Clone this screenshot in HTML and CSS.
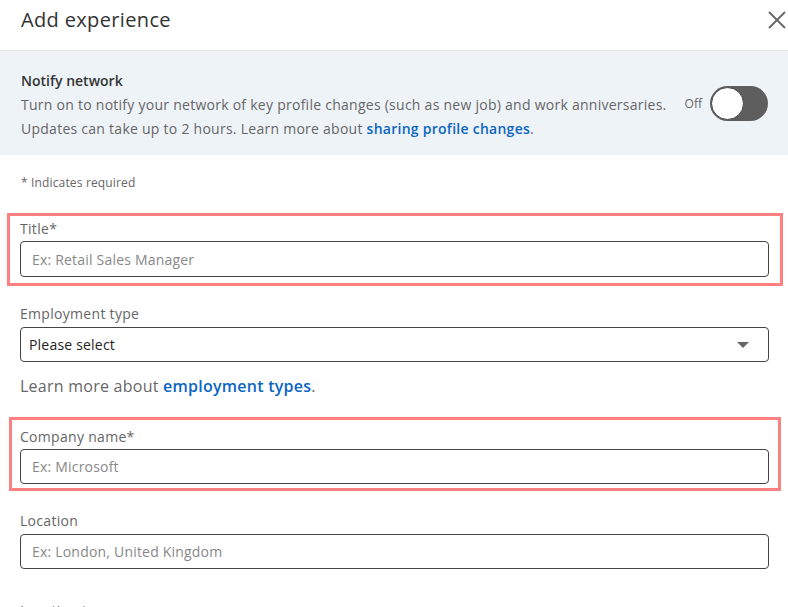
FILE: index.html
```html
<!DOCTYPE html>
<html lang="en">
<head>
<meta charset="utf-8">
<title>Add experience</title>
<link rel="stylesheet" href="styles.css">
</head>
<body>
<div class="modal">
  <header class="modal-header">
    <h2 class="modal-title">Add experience</h2>
    <button class="close-btn" aria-label="Dismiss">
      <svg width="18" height="18" viewBox="0 0 18 18"><path d="M1 1 L17 17 M17 1 L1 17" stroke="#666" stroke-width="1.8" fill="none"/></svg>
    </button>
  </header>

  <section class="notify">
    <div class="notify-text">
      <div class="notify-title">Notify network</div>
      <p class="notify-desc">Turn on to notify your network of key profile changes (such as new job) and work anniversaries. Updates can take up to 2 hours. Learn more about <a href="#" class="link">sharing profile changes</a>.</p>
    </div>
    <div class="toggle-wrap">
      <span class="toggle-label">Off</span>
      <span class="toggle"><span class="knob"></span></span>
    </div>
  </section>

  <div class="form">
    <p class="required-note">* Indicates required</p>

    <div class="highlight highlight-1">
      <label class="field-label">Title*</label>
      <div class="input"><span class="placeholder">Ex: Retail Sales Manager</span></div>
    </div>

    <div class="field field-emp">
      <label class="field-label">Employment type</label>
      <div class="input select"><span class="value">Please select</span><span class="caret"></span></div>
    </div>

    <p class="learn-more">Learn more about <a href="#" class="link">employment types</a>.</p>

    <div class="highlight highlight-2">
      <label class="field-label">Company name*</label>
      <div class="input input-sm"><span class="placeholder">Ex: Microsoft</span></div>
    </div>

    <div class="field field-loc">
      <label class="field-label">Location</label>
      <div class="input input-sm"><span class="placeholder">Ex: London, United Kingdom</span></div>
    </div>

    <div class="field field-loctype">
      <label class="field-label">Location type</label>
    </div>
  </div>
</div>
</body>
</html>
```

FILE: styles.css
```css
* { box-sizing: border-box; }
html, body { margin: 0; padding: 0; background: #fff; }
body {
  font-family: "Open Sans", "Noto Sans", sans-serif;
  color: #666;
  width: 788px;
  height: 607px;
  overflow: hidden;
}
.modal { width: 788px; }

.modal-header {
  height: 51px;
  border-bottom: 1px solid #e6e6e6;
  display: flex;
  align-items: flex-start;
  justify-content: space-between;
  padding: 6px 0 0 21px;
}
.modal-title {
  margin: 0;
  font-size: 20px;
  font-weight: 400;
  line-height: 28px;
  color: #333;
  letter-spacing: 0.35px;
}
.close-btn {
  border: 0;
  background: none;
  padding: 0;
  margin: 5px 2px 0 0;
  width: 18px;
  height: 18px;
  display: flex;
}

.notify {
  background: #eef3f8;
  height: 104px;
  display: flex;
  align-items: center;
  padding: 0 20px 0 21px;
}
.notify-text { flex: 1; padding-top: 6px; }
.notify-title {
  font-size: 14px;
  font-weight: 600;
  line-height: 20px;
  color: #333;
}
.notify-desc {
  margin: 2px 0 0;
  font-size: 14px;
  line-height: 24px;
  color: #666;
  width: 662px;
  letter-spacing: 0.26px;
}
.link { color: #0a66c2; font-weight: 600; text-decoration: none; }

.toggle-wrap { display: flex; align-items: center; gap: 8px; margin-top: 1px; }
.toggle-label { font-size: 12px; color: #666; }
.toggle {
  width: 58px;
  height: 35px;
  border-radius: 18px;
  background: #5e5e5e;
  display: flex;
  align-items: center;
  padding-left: 1px;
}
.knob {
  width: 33px;
  height: 33px;
  border-radius: 50%;
  background: #fff;
  border: 1.5px solid #444;
}

.form { padding: 0 19px 0 20px; }
.required-note {
  margin: 20px 0 0 1px;
  font-size: 12px;
  line-height: 16px;
  color: #666;
  letter-spacing: 0.15px;
}

.field-label {
  display: block;
  font-size: 14px;
  line-height: 20px;
  color: #666;
  letter-spacing: 0.3px;
}
.input {
  height: 36px;
  border: 1px solid #444;
  border-radius: 4px;
  display: flex;
  align-items: center;
  padding: 0 11px;
  font-size: 14px;
  letter-spacing: 0.2px;
}
.input-sm { height: 35px; }
.placeholder { color: #888; }

.highlight {
  border: 3px solid #ff8080;
  margin-left: -13px;
  margin-right: -14px;
  padding-left: 10px;
  padding-right: 11px;
}
.highlight-1 { margin-top: 22px; padding-top: 3px; padding-bottom: 6px; }
.highlight-1 .input { margin-top: 2px; }
.highlight-2 { margin-top: 19px; margin-left: -11px; padding-left: 8px; margin-right: -12px; padding-right: 9px; padding-top: 7px; padding-bottom: 4px; }
.highlight-2 .input { margin-top: 2px; }

.field-emp { margin-top: 18px; }
.field-emp .input { margin-top: 3px; height: 35px; padding-left: 8px; }
.select .value { color: #222; flex: 1; }
.caret {
  width: 0; height: 0;
  border-left: 6px solid transparent;
  border-right: 6px solid transparent;
  border-top: 6px solid #666;
  margin-right: 8px;
}

.learn-more {
  margin: 12px 0 0;
  font-size: 16px;
  line-height: 24px;
  color: #666;
  letter-spacing: 0.25px;
}

.field-loc { margin-top: 20px; }
.field-loc .input { margin-top: 3px; }
.field-loctype { margin-top: 32px; }
```
